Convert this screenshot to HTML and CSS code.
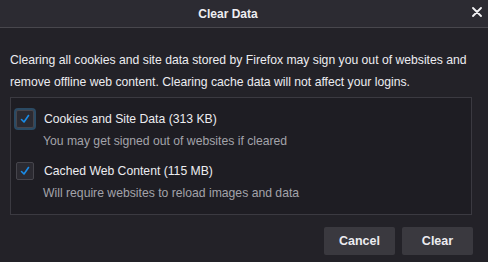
FILE: index.html
```html
<!DOCTYPE html>
<html>
<head>
<meta charset="utf-8">
<link rel="stylesheet" href="styles.css">
</head>
<body>
<div class="dialog">
  <div class="titlebar">
    <span class="title">Clear Data</span>
    <span class="close">
      <svg width="10" height="10" viewBox="0 0 10 10"><path d="M1 1L9 9M9 1L1 9" stroke="#f2f2f4" stroke-width="1.8" stroke-linecap="round"/></svg>
    </span>
  </div>
  <div class="content">
    <p class="desc">Clearing all cookies and site data stored by Firefox may sign you out of websites and remove offline web content. Clearing cache data will not affect your logins.</p>
    <div class="group">
      <div class="item">
        <div class="row">
          <span class="check focused"><svg width="12" height="12" viewBox="0 0 12 12"><path d="M2.5 6.5L5 9L9.5 2.5" fill="none" stroke="#1a8ce8" stroke-width="1.6" stroke-linecap="round" stroke-linejoin="round"/></svg></span>
          <span class="label">Cookies and Site Data (313 KB)</span>
        </div>
        <div class="sub">You may get signed out of websites if cleared</div>
      </div>
      <div class="item">
        <div class="row">
          <span class="check"><svg width="12" height="12" viewBox="0 0 12 12"><path d="M2.5 6.5L5 9L9.5 2.5" fill="none" stroke="#1a8ce8" stroke-width="1.6" stroke-linecap="round" stroke-linejoin="round"/></svg></span>
          <span class="label">Cached Web Content (115 MB)</span>
        </div>
        <div class="sub">Will require websites to reload images and data</div>
      </div>
    </div>
    <div class="buttons">
      <button class="btn">Cancel</button>
      <button class="btn">Clear</button>
    </div>
  </div>
</div>
</body>
</html>
```
FILE: styles.css
```css
html, body {
  margin: 0;
  padding: 0;
  background: #232228;
}
.dialog {
  width: 488px;
  height: 262px;
  background: #232228;
  font-family: "Liberation Sans", Arial, sans-serif;
  font-size: 12.2px;
  color: #ececf0;
  overflow: hidden;
}
.titlebar {
  height: 27px;
  background: #2c2b32;
  border-bottom: 1px solid #48474d;
  position: relative;
  display: flex;
  align-items: center;
  justify-content: center;
}
.title {
  font-weight: bold;
  font-size: 12px;
  color: #eeeef2;
  margin-left: -32px;
}
.close {
  position: absolute;
  right: 6px;
  top: 7px;
  width: 10px;
  height: 10px;
  display: flex;
}
.content {
  padding: 21px 16px 0 10px;
}
.desc {
  margin: 0;
  line-height: 22px;
  color: #ececf0;
}
.group {
  margin-top: 4px;
  border: 1px solid #3b3a41;
  background: #1e1d23;
  padding: 11px 0 0 4px;
  box-sizing: border-box;
  height: 118px;
}
.item {
  margin-bottom: 13px;
}
.row {
  display: flex;
  align-items: center;
  height: 20px;
}
.check {
  width: 16px;
  height: 16px;
  border: 1px solid #46454c;
  background: #2b2a31;
  border-radius: 2px;
  display: flex;
  align-items: center;
  justify-content: center;
  margin-left: 1px;
  margin-right: 10px;
}
.check.focused {
  box-shadow: 0 0 0 2px #2b4a63;
}
.label {
  color: #ececf0;
}
.sub {
  margin-left: 28px;
  margin-top: 5px;
  color: #a3a3aa;
}
.buttons {
  display: flex;
  justify-content: flex-end;
  gap: 7px;
  margin-top: 12px;
  margin-right: -1px;
}
.btn {
  width: 71px;
  height: 28px;
  border: none;
  border-radius: 2px;
  background: #3a393f;
  color: #ececf0;
  font-family: "Liberation Sans", Arial, sans-serif;
  font-weight: bold;
  font-size: 12.5px;
  padding: 0;
}
```
